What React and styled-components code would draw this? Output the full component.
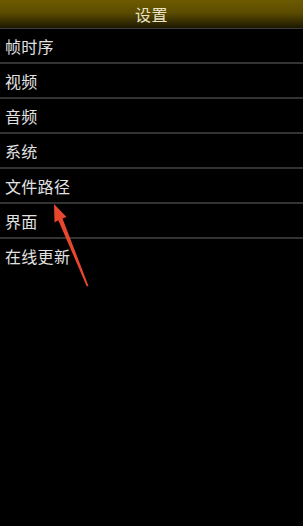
import React from "react";
import styled, { createGlobalStyle } from "styled-components";

const GlobalStyle = createGlobalStyle`
  html, body {
    margin: 0;
    padding: 0;
    background: #000;
  }
  #root {
    min-height: 526px;
  }
`;

const Screen = styled.div`
  position: relative;
  width: 303px;
  height: 526px;
  background: #000;
  font-family: "Noto Sans CJK SC", "Noto Sans", sans-serif;
  overflow: hidden;
`;

const Header = styled.div`
  height: 28px;
  display: flex;
  align-items: center;
  justify-content: center;
  background: linear-gradient(180deg, #6d5a00 0%, #5c4c00 45%, #2e2600 85%, #1c1800 100%);
  border-bottom: 1px solid #3c3c3c;
  color: #ebe4c8;
  font-size: 16px;
  letter-spacing: 0.5px;
`;

const List = styled.div`
  display: flex;
  flex-direction: column;
`;

const Row = styled.div`
  height: 33px;
  display: flex;
  align-items: center;
  padding-left: 5px;
  color: #e2e2e2;
  font-size: 16px;
  letter-spacing: 0.3px;
  border-bottom: ${(p) => (p.last ? "none" : "2px solid #333")};
`;

const Annotation = styled.svg`
  position: absolute;
  left: 0;
  top: 0;
  pointer-events: none;
`;

const items = ["帧时序", "视频", "音频", "系统", "文件路径", "界面", "在线更新"];

function App() {
  return (
    <Screen>
      <GlobalStyle />
      <Header>设置</Header>
      <List>
        {items.map((label, i) => (
          <Row key={label} last={i === items.length - 1}>
            {label}
          </Row>
        ))}
      </List>
      <Annotation width="303" height="526" viewBox="0 0 303 526">
        <polygon
          points="54,204 66.5,217 62.5,218.6 88.5,286 86.8,286.4 58.3,220.3 54.5,222.5"
          fill="#e8472e"
        />
      </Annotation>
    </Screen>
  );
}

export default App;
